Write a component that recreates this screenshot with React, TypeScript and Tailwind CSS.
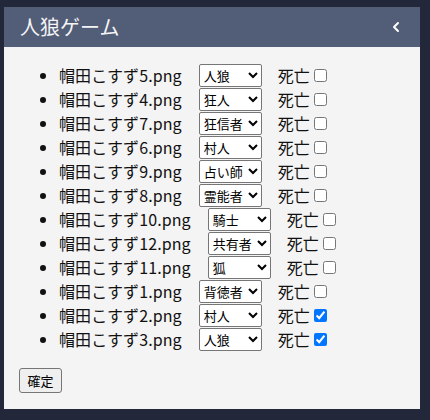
import { ChevronLeft } from 'lucide-react';

const players = [
  { name: '帽田こすず5.png', role: '人狼', dead: false },
  { name: '帽田こすず4.png', role: '狂人', dead: false },
  { name: '帽田こすず7.png', role: '狂信者', dead: false },
  { name: '帽田こすず6.png', role: '村人', dead: false },
  { name: '帽田こすず9.png', role: '占い師', dead: false },
  { name: '帽田こすず8.png', role: '霊能者', dead: false },
  { name: '帽田こすず10.png', role: '騎士', dead: false },
  { name: '帽田こすず12.png', role: '共有者', dead: false },
  { name: '帽田こすず11.png', role: '狐', dead: false },
  { name: '帽田こすず1.png', role: '背徳者', dead: false },
  { name: '帽田こすず2.png', role: '村人', dead: true },
  { name: '帽田こすず3.png', role: '人狼', dead: true },
];

const roles = ['人狼', '狂人', '狂信者', '村人', '占い師', '霊能者', '騎士', '共有者', '狐', '背徳者'];

const App = () => {
  return (
    <div className="w-[430px] h-[420px] bg-[#222839] pl-1 pt-[7px] font-['Noto_Sans_CJK_JP','Noto_Sans',sans-serif]">
      <div className="w-[416px] bg-[#f4f4f4]">
        {/* Header */}
        <div className="h-10 bg-[#525d78] flex items-center justify-between pl-4 pr-4">
          <h1 className="text-[20px] text-[#f4f4f4] font-normal leading-none">人狼ゲーム</h1>
          <ChevronLeft size={16} strokeWidth={3} className="text-white" />
        </div>

        {/* Body */}
        <div className="px-[15px] pt-4 pb-4">
          <ul className="list-disc pl-10 mb-4 text-[16px] text-[#111]">
            {players.map((p) => (
              <li key={p.name} className="h-6">
                <div className="flex items-center h-6">
                  <span className="leading-6 tracking-[0.1px]">{p.name}</span>
                  <select
                    defaultValue={p.role}
                    className="ml-[17px] w-[63px] h-[23px] border border-[#767676] rounded-[2px] bg-white text-[13px] text-black"
                  >
                    {roles.map((r) => (
                      <option key={r} value={r}>{r}</option>
                    ))}
                  </select>
                  <span className="ml-4 leading-6">死亡</span>
                  <input type="checkbox" defaultChecked={p.dead} className="ml-1 w-[13px] h-[13px]" />
                </div>
              </li>
            ))}
          </ul>
          <button className="h-[25px] w-[43px] border border-[#767676] rounded-[3px] bg-[#efefef] text-[13px] text-black">
            確定
          </button>
        </div>
      </div>
    </div>
  );
};

export default App;
